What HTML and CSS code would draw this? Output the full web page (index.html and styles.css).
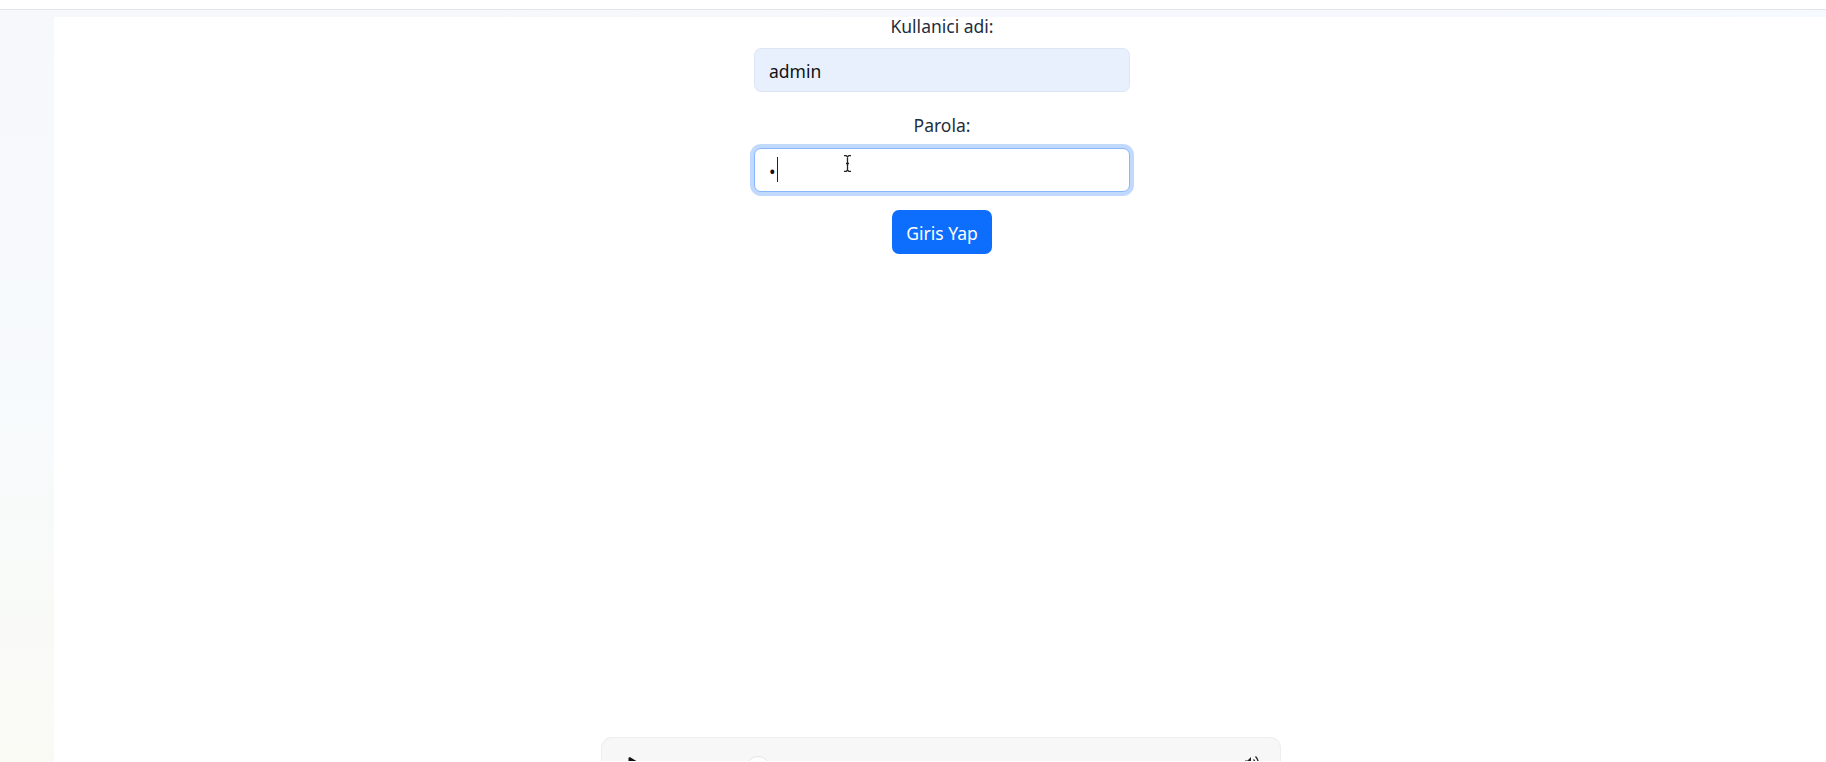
FILE: index.html
```html
<!DOCTYPE html>
<html lang="tr">
<head>
<meta charset="utf-8">
<title>Giris</title>
<link rel="stylesheet" href="styles.css">
</head>
<body>
<header class="topbar"></header>
<div class="band"></div>
<div class="shell">
  <aside class="sidebar"></aside>
  <main class="content">
    <form class="login">
      <label class="field-label" for="user">Kullanici adi:</label>
      <input class="field field-filled" id="user" type="text" value="admin">
      <label class="field-label field-label-next" for="pass">Parola:</label>
      <div class="field-wrap">
        <input class="field field-focused" id="pass" type="password" value="x">
        <span class="caret"></span>
        <svg class="ibeam" width="9" height="17" viewBox="0 0 9 17" aria-hidden="true">
          <path d="M1 .7h2.2l1.300 1 1.300-1H8M4.500 1.700v13.600M1 16.300h2.200l1.300-1 1.300 1H8M3 8.500h3" fill="none" stroke="#222" stroke-width="1.300"/>
        </svg>
      </div>
      <button class="submit" type="button">Giris Yap</button>
    </form>
    <section class="player">
      <svg class="play" width="20" height="24" viewBox="0 0 20 24" aria-hidden="true">
        <path d="M.5 1.500C.5.400 1.600-.2 2.600.4l16 10c1 .7 1 2.400 0 3.100l-16 10c-1 .6-2.100 0-2.100-1.100z" fill="#111"/>
      </svg>
      <span class="thumb"></span>
      <svg class="volume" width="16" height="16" viewBox="0 0 16 16" aria-hidden="true">
        <path d="M1 5.500h2.500L7 2v12l-3.500-3.500H1z" fill="#222"/>
        <path d="M9.500 4.500a5 5 0 0 1 0 7M11.500 1.500a9 9 0 0 1 0 13" fill="none" stroke="#222" stroke-width="1.300"/>
      </svg>
    </section>
  </main>
</div>
</body>
</html>
```
FILE: styles.css
```css
* { box-sizing: border-box; }
html, body { margin: 0; height: 762px; overflow: hidden; background: #fff; }
body { font-family: "Noto Sans", "Open Sans", sans-serif; font-size: 17.5px; color: #1f2d3d; }

.topbar { height: 10px; background: #fff; border-bottom: 1px solid #e2e5e9; }
.band { height: 7px; background: linear-gradient(90deg, #f7f8fa 0%, #f5f8fc 50%, #f5fafe 100%); }
.shell { display: flex; height: 745px; }
.sidebar { width: 54px; flex: none; background: linear-gradient(180deg, #f6f8fb 0%, #f7fafc 50%, #fafaf5 100%); }
.content { flex: 1; display: flex; flex-direction: column; align-items: center; }

.login { width: 376px; margin-left: 4px; display: flex; flex-direction: column; align-items: center; }
.field-label { display: block; line-height: 18px; margin-bottom: 13px; }
.field-label-next { margin-top: 24px; margin-bottom: 14px; }
.field-wrap { position: relative; width: 100%; }
.field { display: block; width: 100%; height: 44px; padding: 2px 14px 0; border: 1px solid #dee2e6; border-radius: 7px; font: inherit; color: #111; outline: none; background: #fff; }
.field-filled { background: #e8f0fe; border-color: #dde6f4; }
.field-focused { border-color: #86b7fe; box-shadow: 0 0 0 4px #c2d9fe; }
.caret { position: absolute; left: 23px; top: 9px; width: 1px; height: 25px; background: #222; }
.ibeam { position: absolute; left: 89px; top: 7px; }

.submit { margin-top: 18px; width: 100px; height: 44px; padding: 1px 0 0; border: 0; border-radius: 7px; background: #0d6efd; color: #fff; font: inherit; }

.player { width: 680px; height: 24px; margin: 483px 0 0 1px; flex: none; display: flex; align-items: flex-start; padding: 19px 20px 0 26px; overflow: hidden; background: #f7f7f7; border: 1px solid #eee; border-bottom: 0; border-radius: 11px 11px 0 0; }
.play { flex: none; }
.thumb { flex: none; width: 26px; height: 26px; margin: -1px 0 0 97px; border-radius: 50%; background: #fff; border: 1px solid #e4e4e4; }
.volume { flex: none; margin: -2px 0 0 auto; }
```
